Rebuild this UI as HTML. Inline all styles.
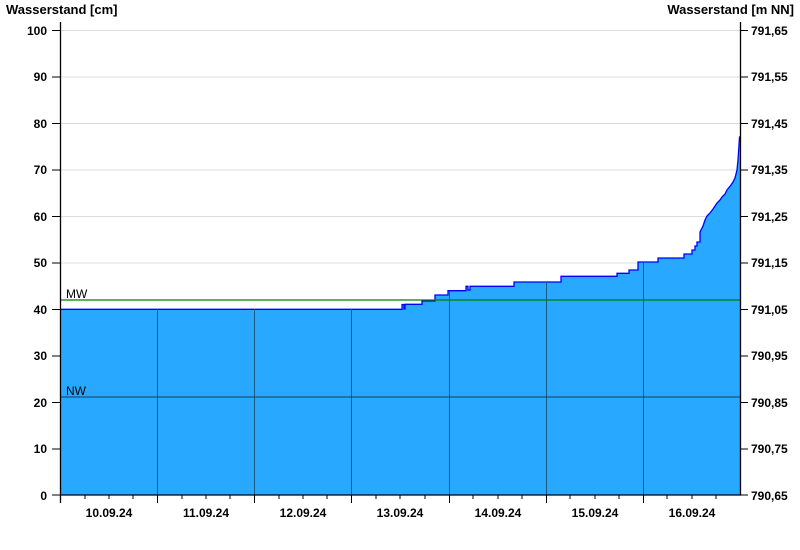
<!DOCTYPE html>
<html><head><meta charset="utf-8"><style>
body{margin:0;background:#fff;}
svg{display:block;font-family:"Liberation Sans",Arial,sans-serif;font-weight:bold;font-size:12px;}
</style></head><body>
<svg width="800" height="550" xmlns="http://www.w3.org/2000/svg">
<rect width="800" height="550" fill="#fff"/>
<text x="6" y="14" font-size="13">Wasserstand [cm]</text>
<text x="794" y="14" font-size="13" text-anchor="end">Wasserstand [m NN]</text>
<g stroke="#dcdcdc" stroke-width="1">
<line x1="61" y1="30.5" x2="740" y2="30.5"/><line x1="61" y1="77" x2="740" y2="77"/>
<line x1="61" y1="123.5" x2="740" y2="123.5"/><line x1="61" y1="170" x2="740" y2="170"/>
<line x1="61" y1="216.5" x2="740" y2="216.5"/><line x1="61" y1="263" x2="740" y2="263"/>
<line x1="61" y1="309.5" x2="740" y2="309.5"/><line x1="61" y1="356" x2="740" y2="356"/>
<line x1="61" y1="402.5" x2="740" y2="402.5"/><line x1="61" y1="449" x2="740" y2="449"/>
</g>
<path d="M61,495 L61,309.3 L402,309.3 L402,304.5 L404,304.5 L404,309 L405,309 L405,304.3 L422,304.3 L422,301 L435,301 L435,295 L448,295 L448,290.7 L466,290.7 L466,286.3 L468,286.3 L468,290 L470,290 L470,286.3 L514,286.3 L514,282 L561,282 L561,276.3 L617,276.3 L617,273.3 L629,273.3 L629,270 L638,270 L638,262 L658,262 L658,258 L684,258 L684,254 L692,254 L692,250 L695,250 L695,246 L697,246 L697,242 L700,242 L700,232 L703,226 L705,220 L707,216 L710,213 L713,209 L717,203 L720,200 L722,197 L725,194 L727,190 L731,185 L733,182 L735,178 L737,170 L738,160 L739,145 L739.5,137 L740,137 L740,495 Z" fill="#29a8ff" stroke="none"/>
<path d="M61,309.3 L402,309.3 L402,304.5 L404,304.5 L404,309 L405,309 L405,304.3 L422,304.3 L422,301 L435,301 L435,295 L448,295 L448,290.7 L466,290.7 L466,286.3 L468,286.3 L468,290 L470,290 L470,286.3 L514,286.3 L514,282 L561,282 L561,276.3 L617,276.3 L617,273.3 L629,273.3 L629,270 L638,270 L638,262 L658,262 L658,258 L684,258 L684,254 L692,254 L692,250 L695,250 L695,246 L697,246 L697,242 L700,242 L700,232 L703,226 L705,220 L707,216 L710,213 L713,209 L717,203 L720,200 L722,197 L725,194 L727,190 L731,185 L733,182 L735,178 L737,170 L738,160 L739,145 L739.5,137 L740,137" fill="none" stroke="#0000ff" stroke-width="1.3"/>
<g stroke="#1a5a80" stroke-width="1">
<line x1="157.5" y1="309" x2="157.5" y2="495"/><line x1="254.5" y1="309" x2="254.5" y2="495"/>
<line x1="351.5" y1="309" x2="351.5" y2="495"/><line x1="449.5" y1="291" x2="449.5" y2="495"/>
<line x1="546.5" y1="282" x2="546.5" y2="495"/><line x1="643.5" y1="262" x2="643.5" y2="495"/>
</g>
<line x1="61" y1="300" x2="740" y2="300" stroke="#008000" stroke-width="1.2"/>
<line x1="61" y1="397" x2="740" y2="397" stroke="#1a3a50" stroke-width="1"/>
<text x="66" y="298" font-weight="normal" font-size="12">MW</text>
<text x="66" y="395" font-weight="normal" font-size="12">NW</text>
<g stroke="#000" stroke-width="1.3">
<line x1="60.5" y1="22" x2="60.5" y2="503"/>
<line x1="740.5" y1="22" x2="740.5" y2="495"/>
<line x1="60" y1="495" x2="741" y2="495"/>
</g>
<g stroke="#000" stroke-width="1">
<line x1="52" y1="30.5" x2="61" y2="30.5"/><line x1="52" y1="77" x2="61" y2="77"/><line x1="52" y1="123.5" x2="61" y2="123.5"/><line x1="52" y1="170" x2="61" y2="170"/><line x1="52" y1="216.5" x2="61" y2="216.5"/><line x1="52" y1="263" x2="61" y2="263"/><line x1="52" y1="309.5" x2="61" y2="309.5"/><line x1="52" y1="356" x2="61" y2="356"/><line x1="52" y1="402.5" x2="61" y2="402.5"/><line x1="52" y1="449" x2="61" y2="449"/><line x1="52" y1="495" x2="61" y2="495"/>
<line x1="740" y1="30.5" x2="748" y2="30.5"/><line x1="740" y1="77" x2="748" y2="77"/><line x1="740" y1="123.5" x2="748" y2="123.5"/><line x1="740" y1="170" x2="748" y2="170"/><line x1="740" y1="216.5" x2="748" y2="216.5"/><line x1="740" y1="263" x2="748" y2="263"/><line x1="740" y1="309.5" x2="748" y2="309.5"/><line x1="740" y1="356" x2="748" y2="356"/><line x1="740" y1="402.5" x2="748" y2="402.5"/><line x1="740" y1="449" x2="748" y2="449"/><line x1="740" y1="495" x2="748" y2="495"/>
<line x1="157.5" y1="495" x2="157.5" y2="503"/><line x1="254.5" y1="495" x2="254.5" y2="503"/><line x1="351.5" y1="495" x2="351.5" y2="503"/><line x1="449.5" y1="495" x2="449.5" y2="503"/><line x1="546.5" y1="495" x2="546.5" y2="503"/><line x1="643.5" y1="495" x2="643.5" y2="503"/>
<line x1="85" y1="495" x2="85" y2="499"/><line x1="109" y1="495" x2="109" y2="499"/><line x1="133" y1="495" x2="133" y2="499"/>
<line x1="182" y1="495" x2="182" y2="499"/><line x1="206" y1="495" x2="206" y2="499"/><line x1="230" y1="495" x2="230" y2="499"/>
<line x1="279" y1="495" x2="279" y2="499"/><line x1="303" y1="495" x2="303" y2="499"/><line x1="327" y1="495" x2="327" y2="499"/>
<line x1="376" y1="495" x2="376" y2="499"/><line x1="400" y1="495" x2="400" y2="499"/><line x1="425" y1="495" x2="425" y2="499"/>
<line x1="473" y1="495" x2="473" y2="499"/><line x1="498" y1="495" x2="498" y2="499"/><line x1="522" y1="495" x2="522" y2="499"/>
<line x1="570" y1="495" x2="570" y2="499"/><line x1="595" y1="495" x2="595" y2="499"/><line x1="619" y1="495" x2="619" y2="499"/>
<line x1="667" y1="495" x2="667" y2="499"/><line x1="692" y1="495" x2="692" y2="499"/><line x1="716" y1="495" x2="716" y2="499"/>
</g>
<g text-anchor="end">
<text x="47" y="35">100</text><text x="47" y="81">90</text><text x="47" y="128">80</text><text x="47" y="174">70</text><text x="47" y="221">60</text><text x="47" y="267">50</text><text x="47" y="314">40</text><text x="47" y="360">30</text><text x="47" y="407">20</text><text x="47" y="453">10</text><text x="47" y="500">0</text>
</g>
<g>
<text x="751" y="35">791,65</text><text x="751" y="81">791,55</text><text x="751" y="128">791,45</text><text x="751" y="174">791,35</text><text x="751" y="221">791,25</text><text x="751" y="267">791,15</text><text x="751" y="314">791,05</text><text x="751" y="360">790,95</text><text x="751" y="407">790,85</text><text x="751" y="453">790,75</text><text x="751" y="500">790,65</text>
</g>
<g text-anchor="middle">
<text x="109" y="517">10.09.24</text><text x="206" y="517">11.09.24</text><text x="303" y="517">12.09.24</text><text x="400" y="517">13.09.24</text><text x="498" y="517">14.09.24</text><text x="595" y="517">15.09.24</text><text x="692" y="517">16.09.24</text>
</g>
</svg>
</body></html>
